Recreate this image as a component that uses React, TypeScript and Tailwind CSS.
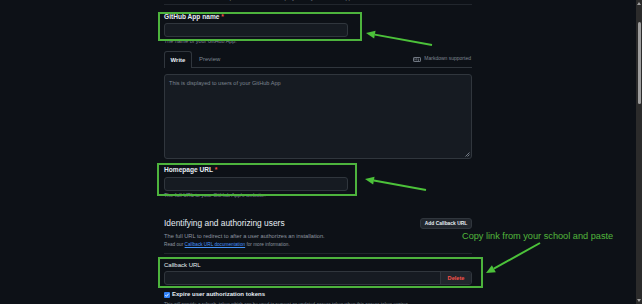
import React from "react";

const font = { fontFamily: '"Liberation Sans", Arial, sans-serif' };

function Arrow({ x1, y1, x2, y2 }: { x1: number; y1: number; x2: number; y2: number }) {
  const ang = Math.atan2(y2 - y1, x2 - x1);
  const len = 9;
  const w = 4;
  const bx = x2 - len * Math.cos(ang);
  const by = y2 - len * Math.sin(ang);
  const p1x = bx + w * Math.sin(ang);
  const p1y = by - w * Math.cos(ang);
  const p2x = bx - w * Math.sin(ang);
  const p2y = by + w * Math.cos(ang);
  return (
    <g>
      <line x1={x1} y1={y1} x2={bx} y2={by} stroke="#4cc23a" strokeWidth={2} />
      <polygon points={`${x2},${y2} ${p1x},${p1y} ${p2x},${p2y}`} fill="#4cc23a" />
    </g>
  );
}

export default function App() {
  return (
    <div className="relative flex h-[304px] w-[642px] overflow-hidden bg-[#0d1117]" style={font}>
      <div className="flex-1 overflow-hidden pl-[164px]">
        <div className="flex w-[308px] flex-col">
          <div className="mt-[-5px] h-[7px] text-[5.6px] leading-[7px] text-[#7d8590] pl-[40px]">
            Use a unique name. It will be displayed for your GitHub App.
          </div>
          <div className="mt-[2px] border-t border-[#21262d]" />
          <div className="mt-[8px] h-[8px] text-[6.6px] font-bold leading-[8px] text-[#e6edf3]">
            GitHub App name <span className="text-[#f85149]">*</span>
          </div>
          <div className="mt-[2px] h-[14px] w-[184px] rounded-[3px] border border-[#30363d] bg-[#161b22]" />
          <div className="mt-[1px] h-[7px] text-[5.4px] leading-[7px] text-[#7d8590]">The name of your GitHub App.</div>
          <div className="mt-[6px] flex h-[17px] items-end border-b border-[#30363d]">
            <div className="-mb-px flex h-[17px] w-[28px] items-center justify-center rounded-t-[3px] border border-b-0 border-[#30363d] bg-[#0d1117] text-[6px] font-bold text-[#e6edf3]">
              Write
            </div>
            <div className="flex h-[16px] items-center pl-[7px] text-[6px] text-[#7d8590]">Preview</div>
            <div className="ml-auto flex h-[16px] items-center gap-[3px] pr-[1px] text-[5px] text-[#7d8590]">
              <svg width="8" height="5" viewBox="0 0 8 5">
                <rect x="0.5" y="0.5" width="7" height="4" rx="0.6" fill="none" stroke="#7d8590" strokeWidth="0.9" />
                <path d="M1.8 3.6V1.4L2.8 2.5L3.8 1.4V3.6M5.5 1.4V3.6M4.8 2.8L5.5 3.6L6.2 2.8" fill="none" stroke="#7d8590" strokeWidth="0.6" />
              </svg>
              <span>Markdown supported</span>
            </div>
          </div>
          <div className="relative mt-[6px] h-[85px] rounded-[3px] border border-[#30363d] bg-[#161b22] px-[4px] pt-[5px] text-[5.6px] leading-[7px] text-[#7d8590]">
            This is displayed to users of your GitHub App
            <svg className="absolute bottom-[1px] right-[1px]" width="5" height="5" viewBox="0 0 5 5">
              <path d="M4.5 0.5L0.5 4.5M4.5 2.5L2.5 4.5" stroke="#8b949e" strokeWidth="0.8" />
            </svg>
          </div>
          <div className="mt-[7px] h-[8px] text-[6.6px] font-bold leading-[8px] text-[#e6edf3]">
            Homepage URL <span className="text-[#f85149]">*</span>
          </div>
          <div className="mt-[3px] h-[14px] w-[184px] rounded-[3px] border border-[#30363d] bg-[#161b22]" />
          <div className="mt-[1px] h-[7px] text-[5.4px] leading-[7px] text-[#7d8590]">The full URL to your GitHub App's website.</div>
          <div className="mt-[19px] flex h-[11px] items-center justify-between">
            <div className="text-[8.4px] leading-[11px] text-[#e6edf3]">Identifying and authorizing users</div>
            <div className="flex h-[11px] w-[52px] items-center justify-center rounded-[3px] border border-[#30363d] bg-[#21262d] text-[4.9px] font-bold text-[#e6edf3]">
              Add Callback URL
            </div>
          </div>
          <div className="mt-[3px] h-[8px] text-[5.7px] leading-[8px] text-[#8d96a0]">
            The full URL to redirect to after a user authorizes an installation.
          </div>
          <div className="mt-[1px] h-[7px] text-[4.7px] leading-[7px] text-[#8d96a0]">
            Read our <span className="text-[#4493f8] underline">Callback URL documentation</span> for more information.
          </div>
          <div className="mt-[5px] border-b border-[#21262d]" />
          <div className="mt-[7px] h-[8px] text-[6px] leading-[8px] text-[#e6edf3]">Callback URL</div>
          <div className="mt-[2px] flex h-[14px] rounded-[3px] border border-[#30363d] bg-[#161b22]">
            <div className="flex-1" />
            <div className="flex w-[31px] items-center justify-center rounded-r-[3px] border-l border-[#30363d] bg-[#21262d] text-[5.6px] font-bold text-[#f85149]">
              Delete
            </div>
          </div>
          <div className="mt-[5px] flex h-[9px] items-center gap-[2px]">
            <svg width="6" height="6" viewBox="0 0 6 6">
              <rect width="6" height="6" rx="1" fill="#2f81f7" />
              <path d="M1.3 3.1L2.5 4.3L4.7 1.7" fill="none" stroke="#fff" strokeWidth="0.9" />
            </svg>
            <span className="text-[6px] font-bold text-[#e6edf3]">Expire user authorization tokens</span>
          </div>
          <div className="mt-[2px] h-[7px] whitespace-nowrap text-[4.6px] leading-[7px] text-[#7d8590]">
            This will provide a refresh_token which can be used to request an updated access token when this access token expires.
          </div>
        </div>
      </div>
      <div className="flex w-[6px] flex-col items-center bg-[#2b2b2b]">
        <div className="mt-[2px] h-0 w-0 border-x-[2px] border-b-[3px] border-x-transparent border-b-[#a0a0a0]" />
        <div className="mt-[17px] h-[82px] w-[3px] rounded-full bg-[#9e9e9e]" />
        <div className="mt-auto mb-[2px] h-0 w-0 border-x-[2px] border-t-[3px] border-x-transparent border-t-[#a0a0a0]" />
      </div>

      {/* annotations */}
      <div className="absolute left-[158px] top-[12px] h-[29px] w-[204px] border-2 border-[#4db33d]" />
      <div className="absolute left-[157px] top-[163px] h-[33px] w-[200px] border-2 border-[#4db33d]" />
      <div className="absolute left-[158px] top-[257px] h-[31px] w-[325px] border-2 border-[#4db33d]" />
      <div className="absolute left-[462px] top-[230px] whitespace-nowrap text-[9.2px] leading-[12px] text-[#52b83c]">
        Copy link from your school and paste
      </div>
      <svg className="pointer-events-none absolute left-0 top-0" width="642" height="304">
        <Arrow x1={432} y1={45} x2={366} y2={33} />
        <Arrow x1={426} y1={190} x2={365} y2={179} />
        <Arrow x1={540} y1={243} x2={486} y2={273} />
      </svg>
    </div>
  );
}
